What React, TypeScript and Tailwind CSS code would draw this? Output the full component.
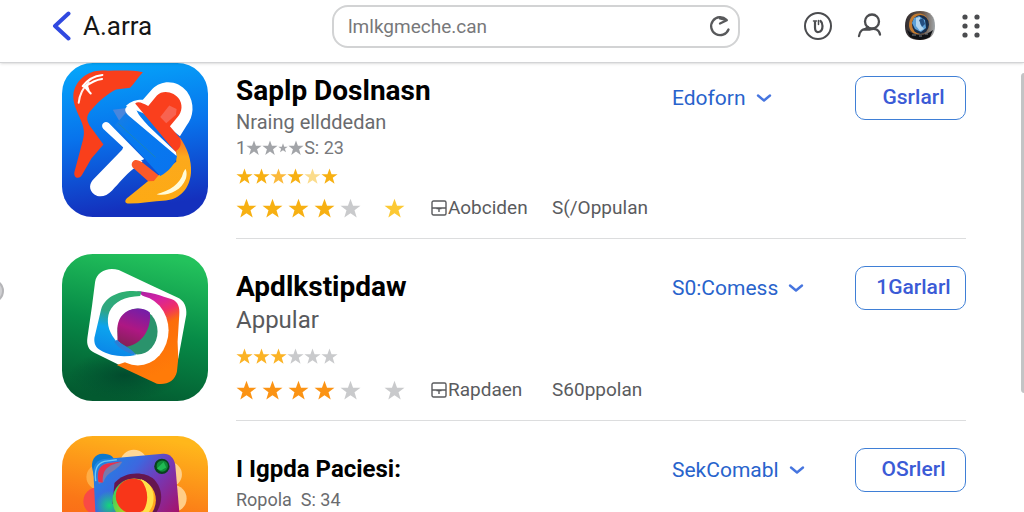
import type { ReactNode } from "react";
import clsx from "clsx";

type Ratings = {
  small: string[];
  large: string[];
  tag: string;
  plan: string;
};

type AppEntry = {
  name: string;
  nameClass: string;
  subtitle: string;
  subtitleClass: string;
  meta?: ReactNode;
  ratings?: Ratings;
  smallClass?: string;
  largeClass?: string;
  category: string;
  action: string;
  actionsClass?: string;
  artwork: ReactNode;
  artworkClass: string;
  rowClass?: string;
  detailsClass: string;
};

const GOLD = "#f7b012";
const PALE = "#fbdc8c";
const YELLOW = "#fcc934";
const ORANGE = "#fb9314";
const GRAY = "#c9cacc";

function Star({ color, className }: { color: string; className: string }) {
  return (
    <svg viewBox="0 0 24 24" fill={color} className={clsx("shrink-0", className)} aria-hidden="true">
      <path d="M12 .8l2.9 8h8.5l-6.8 5.1 2.5 8.5L12 17.4l-7.1 5 2.5-8.5L.6 8.8h8.5z" />
    </svg>
  );
}

function BrushArtwork() {
  return (
    <svg viewBox="38 22 437 465" className="h-full w-full" preserveAspectRatio="none" aria-hidden="true">
      <defs>
        <linearGradient id="brush-bg" x1="0" y1="0" x2="0.15" y2="1">
          <stop offset="0" stopColor="#05a9fb" />
          <stop offset="0.5" stopColor="#0873ec" />
          <stop offset="1" stopColor="#1430bd" />
        </linearGradient>
        <linearGradient id="brush-blade" x1="0" y1="0" x2="1" y2="1">
          <stop offset="0" stopColor="#1e7fe0" />
          <stop offset="0.3" stopColor="#067bf0" />
          <stop offset="1" stopColor="#0a73ee" />
        </linearGradient>
        <linearGradient id="brush-gold" x1="0" y1="0" x2="0" y2="1">
          <stop offset="0" stopColor="#fb6a24" />
          <stop offset="0.3" stopColor="#fca91c" />
          <stop offset="1" stopColor="#fdaa14" />
        </linearGradient>
      </defs>
      <rect x="38" y="22" width="437" height="465" rx="92" ry="92" fill="url(#brush-bg)" />
      <path
        d="M280 50C245 42 200 46 160 45C112 44 76 78 72 118C70 145 84 170 95 196C106 222 106 238 98 264L75 352C72 372 92 374 99 358L126 310L162 268L120 210C110 192 112 182 122 168C150 135 176 113 200 102L242 97C256 82 266 64 280 50Z"
        fill="#f93f1b"
      />
      <path d="M88 142C90 118 100 98 118 80" fill="none" stroke="#fff0ed" strokeWidth="6" strokeLinecap="round" />
      <path d="M100 92C114 72 134 61 159 58M108 94C124 80 140 72 158 70M104 92L124 114M112 88L118 106" fill="none" stroke="#fff" strokeWidth="6" strokeLinecap="round" />
      <path d="M229 152C244 136 266 132 280 133L309 100C338 70 385 74 412 108C437 144 432 184 411 211L391 243L362 220L285 175Z" fill="#fff" />
      <path d="M257 144C266 136 280 143 296 152L322 120C341 101 376 110 390 133C402 155 394 177 379 191L361 213L389 246C401 256 399 282 382 296Z" fill="#fa3f1d" />
      <path d="M332 185L359 150L381 161L379 178L350 204Z" fill="#f86350" />
      <path d="M389 245C413 277 427 318 424 354C420 400 393 432 349 437C307 439 270 447 234 446C224 444 226 434 238 426L296 378L332 358L380 320L380 287C394 280 397 262 389 245Z" fill="url(#brush-gold)" />
      <path d="M401 353C393 388 359 409 321 418C349 426 394 410 408 373C413 360 411 345 407 342Z" fill="#fffbd9" />
      <path d="M190 163L233 158L238 190L214 205Z" fill="#4a86dc" />
      <path d="M240 160L382 302C379 325 357 350 332 363L196 210Z" fill="url(#brush-blade)" />
      <path d="M233 153C245 143 258 151 261 164C265 178 286 201 304 219L379 291L381 303L238 181C227 171 223 160 233 153Z" fill="#fff" />
      <path d="M207 205L318 307" stroke="#238b9f" strokeWidth="2" />
      <path d="M178 203L284 312L258 326L220 276L162 221C151 209 165 193 178 203Z" fill="#fff" />
      <path d="M222 275L279 320L250 343C228 360 207 387 188 407C170 426 150 429 135 419C117 405 119 386 133 372L218 284Z" fill="#fff" />
      <path d="M251 319C259 309 276 319 287 329L327 361L313 378L296 379L249 337C245 330 246 324 251 319Z" fill="#fa5929" />
    </svg>
  );
}

function LensArtwork() {
  return (
    <svg viewBox="38 26 437 442" className="h-full w-full" preserveAspectRatio="none" aria-hidden="true">
      <defs>
        <linearGradient id="lens-bg" x1="0.6" y1="0" x2="0.4" y2="1">
          <stop offset="0" stopColor="#23c25c" />
          <stop offset="0.5" stopColor="#078b47" />
          <stop offset="1" stopColor="#035a30" />
        </linearGradient>
        <radialGradient id="lens-shade">
          <stop offset="0" stopColor="#003e29" stopOpacity="0.7" />
          <stop offset="1" stopColor="#003e29" stopOpacity="0" />
        </radialGradient>
        <linearGradient id="lens-left" x1="0.6" y1="0" x2="0.4" y2="1">
          <stop offset="0" stopColor="#2eb070" />
          <stop offset="0.35" stopColor="#2fa582" />
          <stop offset="0.6" stopColor="#0ca4ee" />
          <stop offset="1" stopColor="#0b86e8" />
        </linearGradient>
        <linearGradient id="lens-right" x1="0" y1="0" x2="0.3" y2="1">
          <stop offset="0" stopColor="#8c219f" />
          <stop offset="0.25" stopColor="#d222a5" />
          <stop offset="0.4" stopColor="#ef2e68" />
          <stop offset="0.54" stopColor="#fc6d0b" />
          <stop offset="1" stopColor="#ff7b08" />
        </linearGradient>
        <linearGradient id="lens-core" x1="0.7" y1="0" x2="0.4" y2="1">
          <stop offset="0" stopColor="#741ea8" />
          <stop offset="0.55" stopColor="#ae1783" />
          <stop offset="1" stopColor="#86205a" />
        </linearGradient>
      </defs>
      <rect x="38" y="26" width="437" height="442" rx="92" fill="url(#lens-bg)" />
      <ellipse cx="225" cy="390" rx="165" ry="76" fill="url(#lens-shade)" />
      <path d="M208 74L311 123L382 156C404 165 412 186 410 209L386 340L330 360L214 362L135 323C117 315 111 299 114 278L128 181L137 110C142 79 174 64 208 74Z" fill="#fff" />
      <path d="M262 138C300 139 336 152 367 162C386 170 391 186 389 209L384 290L386 340L382 380C376 408 351 421 322 416L202 360L260 340L330 300L340 220L290 160Z" fill="url(#lens-right)" />
      <ellipse cx="265" cy="256" rx="92" ry="105" fill="#fff" />
      <path d="M276 139C215 130 166 153 155 193L135 278C133 296 140 308 152 315C181 333 220 338 260 330C228 316 207 300 196 282C176 258 170 226 180 200C194 168 226 154 272 152Z" fill="url(#lens-left)" />
      <ellipse cx="264" cy="259" rx="60" ry="69" fill="#2a936c" />
      <path d="M301 202C287 188 258 186 237 196C211 209 202 234 204 260V288L232 305C281 295 306 249 301 202Z" fill="url(#lens-core)" />
      <path d="M203 284C218 302 240 306 260 328C236 326 208 312 194 290Z" fill="#2b7fd6" />
    </svg>
  );
}

function CameraArtwork() {
  return (
    <svg viewBox="38 37 437 440" className="h-full w-full" preserveAspectRatio="none" aria-hidden="true">
      <defs>
        <linearGradient id="camera-bg" x1="0.6" y1="0" x2="0.4" y2="1">
          <stop offset="0" stopColor="#ffb71b" />
          <stop offset="0.5" stopColor="#fb7717" />
          <stop offset="1" stopColor="#f9511c" />
        </linearGradient>
        <linearGradient id="camera-body" x1="0.1" y1="0" x2="0.8" y2="0.7">
          <stop offset="0" stopColor="#1b88e4" />
          <stop offset="0.35" stopColor="#3d67df" />
          <stop offset="0.6" stopColor="#7439b7" />
          <stop offset="1" stopColor="#a6126b" />
        </linearGradient>
        <linearGradient id="camera-ring" x1="0" y1="0" x2="1" y2="0.3">
          <stop offset="0" stopColor="#15ce75" />
          <stop offset="0.4" stopColor="#9ad52a" />
          <stop offset="0.75" stopColor="#ffdc35" />
          <stop offset="1" stopColor="#ffa71c" />
        </linearGradient>
        <radialGradient id="camera-glow">
          <stop offset="0" stopColor="#13d67c" />
          <stop offset="1" stopColor="#13d67c" stopOpacity="0" />
        </radialGradient>
      </defs>
      <rect x="38" y="37" width="437" height="440" rx="92" fill="url(#camera-bg)" />
      <circle cx="253" cy="119" r="41" fill="#ffd797" />
      <circle cx="149" cy="160" r="38" fill="#ffad45" />
      <circle cx="360" cy="152" r="37" fill="#ffd08a" />
      <circle cx="371" cy="224" r="40" fill="#ffcd88" />
      <circle cx="143" cy="232" r="41" fill="#f94a45" />
      <path d="M130 141C122 111 136 90 160 90C184 90 199 100 196 126L139 183Z" fill="#0c78cd" />
      <path d="M166 106L340 90C361 89 374 103 377 124L400 390L145 410L132 146C131 122 145 108 166 106Z" fill="url(#camera-body)" />
      <circle cx="180" cy="245" r="44" fill="url(#camera-glow)" />
      <path d="M139 172C134 137 142 119 165 113L202 108" fill="none" stroke="#6ccaf4" strokeWidth="4" />
      <path d="M148 181C139 149 148 123 176 118L219 114C199 146 174 141 163 174Z" fill="#797aac" />
      <path d="M147 174C142 142 149 121 183 118L216 113C184 125 158 127 160 177Z" fill="#e7314c" />
      <circle cx="337" cy="128" r="23" fill="#08411c" />
      <circle cx="338" cy="127" r="17" fill="#108b38" />
      <path d="M322 134L342 115L350 131L334 140Z" fill="#20ba53" />
      <path d="M195 178C222 143 285 140 314 167C345 200 342 254 301 286L189 240Z" fill="#65164f" />
      <circle cx="254" cy="229" r="65" fill="url(#camera-ring)" />
      <circle cx="251" cy="217" r="52" fill="#f83619" />
      <path d="M273 166C306 177 319 211 309 244C300 268 283 282 266 283C297 249 304 206 273 166Z" fill="#ffe149" />
    </svg>
  );
}

const apps: AppEntry[] = [
  {
    name: "Saplp Doslnasn",
    nameClass: "text-[28px]",
    subtitle: "Nraing ellddedan",
    subtitleClass: "mt-1 text-xl leading-6 text-[#6a6b6e]",
    meta: (
      <p className="mt-0.5 flex h-6 items-center text-lg leading-6 text-[#77787b]">
        1
        <Star color="#a2a4a8" className="size-4" />
        <Star color="#a2a4a8" className="size-4" />
        <Star color="#a2a4a8" className="h-4 w-2.5" />
        <Star color="#a2a4a8" className="size-4" />
        S: 23
      </p>
    ),
    ratings: {
      small: [GOLD, GOLD, "#fbb93b", GOLD, PALE, GOLD],
      large: [GOLD, GOLD, GOLD, GOLD, GRAY, YELLOW],
      tag: "Aobciden",
      plan: "S(/Oppulan",
    },
    smallClass: "mt-1.5",
    largeClass: "mt-3",
    category: "Edoforn",
    action: "Gsrlarl",
    artwork: <BrushArtwork />,
    artworkClass: "h-[154px]",
    detailsClass: "pt-[13px]",
  },
  {
    name: "Apdlkstipdaw",
    nameClass: "text-[28px]",
    subtitle: "Appular",
    subtitleClass: "mt-1 text-2xl leading-7 text-[#58595c]",
    ratings: {
      small: ["#fbb325", "#fbb325", "#fbb325", GRAY, GRAY, GRAY],
      large: [ORANGE, ORANGE, ORANGE, ORANGE, GRAY, GRAY],
      tag: "Rapdaen",
      plan: "S60ppolan",
    },
    smallClass: "mt-3",
    largeClass: "mt-3.5",
    category: "S0:Comess",
    action: "1Garlarl",
    actionsClass: "-mt-1.5",
    artwork: <LensArtwork />,
    artworkClass: "h-[147px]",
    rowClass: "pt-[15px]",
    detailsClass: "pt-[18px]",
  },
  {
    name: "I Igpda Paciesi:",
    nameClass: "text-2xl",
    subtitle: "Ropola  S: 34",
    subtitleClass: "mt-1 text-lg leading-6 text-[#6a6b6e]",
    category: "SekComabl",
    action: "OSrlerl",
    actionsClass: "-mt-1.5",
    artwork: <CameraArtwork />,
    artworkClass: "h-[147px]",
    rowClass: "pt-[15px]",
    detailsClass: "pt-[18px]",
  },
];

function Header() {
  return (
    <header className="relative z-10 grid h-[63px] shrink-0 grid-cols-[280px_1fr_auto] items-center border-b border-[#d3d4d6] bg-white pb-2.5 pl-[52px] pr-[38px] shadow-sm">
      <button type="button" className="flex items-center gap-3 text-[26px] leading-8 text-[#161616]">
        <svg viewBox="0 0 19 32" className="h-8 w-[19px]" fill="none" stroke="#3049e0" strokeWidth="4" strokeLinecap="round" strokeLinejoin="round" aria-hidden="true">
          <path d="M16.500 3.500L3 16l13.500 12.500" />
        </svg>
        A.arra
      </button>
      <div className="relative">
        <input
          type="text"
          aria-label="Address"
          defaultValue="lmlkgmeche.can"
          className="h-[43px] w-full rounded-2xl border-2 border-[#d2d3d4] bg-white pl-3.5 pr-12 text-[19px] text-[#77787a] outline-none"
        />
        <button type="button" aria-label="Reload" className="absolute right-2 top-2.5">
          <svg viewBox="0 0 24 24" className="size-6" fill="none" stroke="#58595b" strokeWidth="2.300" strokeLinecap="round" strokeLinejoin="round">
            <path d="M20.500 14.500A9 9 0 1 1 18.500 4.800M12 8.500L18.800 5.200L12 3.500" />
          </svg>
        </button>
      </div>
      <nav className="ml-[63px] flex items-center gap-[21px] text-[#4b4c4f]">
        <button type="button" aria-label="Updates">
          <svg viewBox="0 0 30 30" className="size-[30px]" fill="none" stroke="currentColor" strokeWidth="2" strokeLinecap="round">
            <circle cx="15" cy="15" r="13" />
            <path d="M12 11v5.500q0 5 3.500 4.500 4-.5 4-6 0-3.500-2-5" strokeWidth="2.200" />
            <path d="M10.500 10h3M15.500 9.500v4" strokeWidth="1.500" />
          </svg>
        </button>
        <button type="button" aria-label="Account">
          <svg viewBox="0 0 30 30" className="size-[30px]" fill="none" stroke="currentColor" strokeWidth="2.300" strokeLinecap="round">
            <circle cx="18" cy="10.500" r="7" />
            <path d="M5 25C5.500 20 9 17.500 12 18.500L16 18.500C21 17 25 18.500 26 23.500M14 16l-3 2.500" />
          </svg>
        </button>
        <button type="button" aria-label="Profile">
          <svg viewBox="0 0 30 30" className="size-[30px]">
            <defs>
              <linearGradient id="avatar-rim" x1="0" x2="1">
                <stop offset="0" stopColor="#302d31" />
                <stop offset="0.6" stopColor="#685548" />
                <stop offset="1" stopColor="#a0a6aa" />
              </linearGradient>
            </defs>
            <path d="M15 0C26 0 30 6 30 15S25 29 15 29 0 25 0 15 5 0 15 0Z" fill="url(#avatar-rim)" />
            <path d="M2 19Q15 29 28 19L25 26Q15 32 5 26Z" fill="#101216" />
            <path d="M4 15C4 5 10 1 17 3C25 5 27 19 19 22C11 25 5 22 4 15Z" fill="#c37b30" />
            <ellipse cx="15.500" cy="13.500" rx="8.500" ry="9.500" fill="#182e4c" />
            <path d="M9 7L14 5L20 9L21 17L16 21L10 18L7 12Z" fill="#5b9fd6" />
            <path d="M11 7L15 6L15 13L19 18L15 20L11 15Z" fill="#b2d5ef" />
            <path d="M14 9L18 7L20 13L17 16Z" fill="#254f81" />
            <path d="M7 24h4M14 25h3M20 23h3" stroke="#777f86" />
          </svg>
        </button>
        <button type="button" aria-label="More apps">
          <svg viewBox="0 0 30 30" className="size-[30px]" fill="currentColor">
            <circle cx="9" cy="6" r="2.600" />
            <circle cx="21" cy="6" r="2.600" />
            <circle cx="9" cy="15" r="2.600" />
            <circle cx="21" cy="15" r="2.600" />
            <circle cx="9" cy="24" r="2.600" />
            <circle cx="21" cy="24" r="2.600" />
          </svg>
        </button>
      </nav>
    </header>
  );
}

function AppRow({ app }: { app: AppEntry }) {
  return (
    <article className={clsx("flex gap-7", app.rowClass)}>
      <div className={clsx("w-[146px] shrink-0", app.artworkClass)}>{app.artwork}</div>

      <div className={clsx("min-w-0 flex-1 border-b border-[#dcddde] pb-5", app.detailsClass)}>
        <div className="flex items-start">
          <div className="min-w-0 flex-1">
            <h2 className={clsx("whitespace-nowrap font-bold leading-[30px] text-black", app.nameClass)}>{app.name}</h2>
            <p className={clsx("whitespace-pre", app.subtitleClass)}>{app.subtitle}</p>
            {app.meta}
          </div>

          <div className={clsx("flex shrink-0 items-start", app.actionsClass)}>
            <div className="flex w-[183px] items-center gap-2 pt-1 text-[#2863cc]">
              <select
                aria-label={`${app.name} category`}
                defaultValue={app.category}
                className="appearance-none bg-transparent text-[21px] leading-9 outline-none [field-sizing:content]"
              >
                <option>{app.category}</option>
              </select>
              <svg viewBox="0 0 20 20" className="pointer-events-none size-5" fill="none" stroke="#4675df" strokeWidth="2.400" strokeLinecap="round" strokeLinejoin="round" aria-hidden="true">
                <path d="M4 7.500l6 5 6-5" />
              </svg>
            </div>
            <button type="button" className="h-11 w-[111px] rounded-[10px] border border-[#3f7fd6] pl-1.5 text-[21px] font-medium text-[#3b5bd6]">
              {app.action}
            </button>
          </div>
        </div>

        {app.ratings && (
          <>
            <div className={clsx("flex h-5 items-center", app.smallClass)}>
              {app.ratings.small.map((color, i) => (
                <Star key={i} color={color} className="size-[17px]" />
              ))}
            </div>
            <div className={clsx("flex h-5 items-center text-[#5a5b5e]", app.largeClass)}>
              <div className="flex gap-[5px]">
                {app.ratings.large.map((color, i) => (
                  <Star key={i} color={color} className={clsx("size-[21px]", i === 5 && "ml-[18px]")} />
                ))}
              </div>
              <svg viewBox="0 0 16 16" className="ml-[26px] size-4 shrink-0" fill="none" stroke="currentColor" strokeWidth="1.400" aria-hidden="true">
                <rect x="1" y="1" width="14" height="14" rx="1.500" />
                <path d="M1 8h14M8 8v4M5.500 8.500h5" />
              </svg>
              <span className="w-[105px] pl-px text-[19px] leading-5">{app.ratings.tag}</span>
              <span className="text-[19px] leading-5">{app.ratings.plan}</span>
            </div>
          </>
        )}
      </div>
    </article>
  );
}

export default function App() {
  return (
    <div className="relative flex h-screen flex-col overflow-hidden bg-white font-[Roboto,sans-serif]">
      <Header />
      <main className="min-h-0 flex-1 overflow-hidden pl-[62px] pr-[58px]">
        {apps.map((app) => (
          <AppRow key={app.name} app={app} />
        ))}
      </main>
      <div className="absolute -left-5 top-[279px] size-6 rounded-full border-2 border-[#b5b5b8] bg-[#d0d0d3]" />
      <div className="absolute -right-1 top-[73px] h-80 w-[7px] rounded-full bg-[#c3c4c5]" />
    </div>
  );
}
